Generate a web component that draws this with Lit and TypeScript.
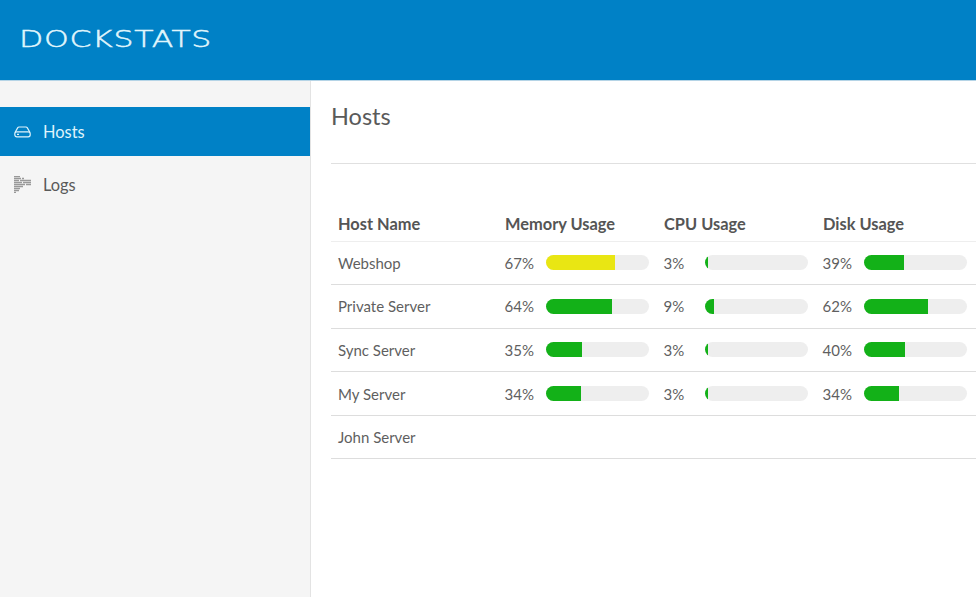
import { LitElement, html, css, svg } from "lit";
import { customElement } from "lit/decorators.js";

type Row = { name: string; mem?: number; cpu?: number; disk?: number };
const rows: Row[] = [
  { name: "Webshop", mem: 67, cpu: 3, disk: 39 },
  { name: "Private Server", mem: 64, cpu: 9, disk: 62 },
  { name: "Sync Server", mem: 35, cpu: 3, disk: 40 },
  { name: "My Server", mem: 34, cpu: 3, disk: 34 },
  { name: "John Server" },
];

const logLines: [number, number, number][] = [
  [0, 0, 6], [0, 2, 7], [8, 2, 2], [0, 4, 5], [6, 4, 11], [0, 6, 8], [9, 6, 8],
  [0, 8, 11], [12, 8, 5], [0, 10, 9], [0, 12, 6], [0, 14, 5], [0, 16, 2],
];

@customElement("app-root")
export class AppRoot extends LitElement {
  static styles = css`
    :host {
      display: block;
      width: 976px;
      height: 597px;
      overflow: hidden;
      font-family: Lato, "Open Sans", sans-serif;
      color: #5f5f5f;
      background: #fff;
    }
    .header {
      height: 80px;
      background: #0081c6;
      border-bottom: 1px solid #b5d4e6;
      display: flex;
      align-items: center;
      padding-left: 19px;
    }
    .logo {
      font-family: "DejaVu Sans", sans-serif;
      font-weight: 200;
      font-size: 23px;
      line-height: 24px;
      color: #e0f6fc;
      letter-spacing: 0.5px;
      -webkit-text-stroke: 0.45px #e0f6fc;
      transform: scaleX(1.37);
      transform-origin: left center;
      white-space: nowrap;
      margin-top: -3px;
    }
    .body {
      display: flex;
      height: 516px;
    }
    .side {
      width: 310px;
      flex: none;
      background: #f5f5f5;
      border-right: 1px solid #e3e3e3;
      padding-top: 26px;
      display: flex;
      flex-direction: column;
      gap: 4px;
    }
    .item {
      height: 49px;
      display: flex;
      align-items: center;
      padding-left: 14px;
      gap: 12px;
      font-size: 16.4px;
      color: #5a5a5a;
    }
    .item svg {
      width: 17px;
      height: 17px;
      flex: none;
    }
    .item.active {
      background: #0081c6;
      color: #dff3fb;
    }
    .main {
      flex: 1;
      min-width: 0;
      padding-left: 20px;
    }
    h1 {
      margin: 0;
      height: 83px;
      box-sizing: border-box;
      padding-top: 20px;
      font-size: 23.5px;
      line-height: 30px;
      font-weight: 400;
      color: #5a5a5a;
      border-bottom: 1px solid #e0e0e0;
    }
    table {
      margin-top: 41px;
      border-collapse: collapse;
      table-layout: fixed;
      width: 645px;
    }
    th {
      font-size: 16.4px;
      font-weight: 700;
      text-align: left;
      padding: 2px 7px 0;
      height: 36px;
      box-sizing: border-box;
      border-bottom: 1px solid #eee;
      color: #555;
    }
    td {
      font-size: 15px;
      padding: 0 7px;
      height: 43.6px;
      box-sizing: border-box;
      border-bottom: 1px solid #ddd;
    }
    .usage {
      display: flex;
      align-items: center;
      margin-left: -0.5px;
    }
    .pct {
      width: 41.5px;
      flex: none;
    }
    .track {
      width: 103px;
      height: 15px;
      border-radius: 8px;
      background: #eee;
      overflow: hidden;
    }
    .fill {
      height: 100%;
      background: #13b118;
    }
    .fill.warn {
      background: #e9e613;
    }
  `;

  private usage(v?: number) {
    if (v === undefined) return html`<td></td>`;
    return html`<td>
      <div class="usage">
        <span class="pct">${v}%</span>
        <div class="track">
          <div class="fill ${v > 65 ? "warn" : ""}" style="width:${v}%"></div>
        </div>
      </div>
    </td>`;
  }

  render() {
    return html`
      <div class="header"><div class="logo">DOCKSTATS</div></div>
      <div class="body">
        <nav class="side">
          <div class="item active">
            <svg viewBox="0 0 17 17" fill="none" stroke="#dff3fb" stroke-width="1.2">
              <path d="M1 9.5 L3.8 4.6 Q4.2 4 5 4 H12 Q12.8 4 13.2 4.6 L16 9.5" />
              <rect x="0.8" y="8.8" width="15.4" height="5" rx="2" />
              <path d="M3 11.3 H5" />
            </svg>
            Hosts
          </div>
          <div class="item">
            <svg viewBox="0 0 17 17" stroke="#999" stroke-width="1.5">
              ${logLines.map(
                ([x, y, w]) => svg`<path d="M${x} ${y + 0.5} h${w}" />`
              )}
            </svg>
            Logs
          </div>
        </nav>
        <main class="main">
          <h1>Hosts</h1>
          <table>
            <colgroup>
              <col style="width:167px" /><col style="width:159px" /><col style="width:159px" /><col style="width:160px" />
            </colgroup>
            <thead>
              <tr>
                <th>Host Name</th>
                <th>Memory Usage</th>
                <th>CPU Usage</th>
                <th>Disk Usage</th>
              </tr>
            </thead>
            <tbody>
              ${rows.map(
                (r) => html`<tr>
                  <td>${r.name}</td>
                  ${this.usage(r.mem)} ${this.usage(r.cpu)} ${this.usage(r.disk)}
                </tr>`
              )}
            </tbody>
          </table>
        </main>
      </div>
    `;
  }
}
